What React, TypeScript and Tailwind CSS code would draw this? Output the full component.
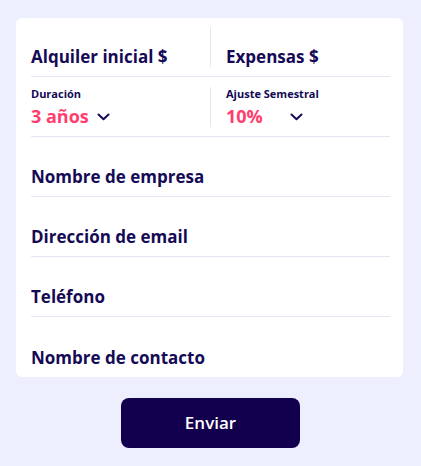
import React from "react";

const Chevron = () => (
  <svg width="13" height="8" viewBox="0 0 13 8" fill="none" className="text-[#150a55]">
    <path d="M1.5 1.5 L6.5 6.2 L11.5 1.5" stroke="currentColor" strokeWidth="2" strokeLinecap="round" strokeLinejoin="round" />
  </svg>
);

const Field = ({ label, last }: { label: string; last?: boolean }) => (
  <div className={`flex h-[60px] items-end pb-[7px] ${last ? "" : "border-b border-[#e6e6f0]"}`}>
    <span className="text-[17px] font-bold leading-[24px] text-[#150a55]">{label}</span>
  </div>
);

export default function App() {
  return (
    <div
      className="min-h-[466px] w-full bg-[#eeeffe] pt-[18px]"
      style={{ fontFamily: "'Open Sans', 'Noto Sans', sans-serif" }}
    >
      <div className="ml-[16px] mr-[18px] h-[359px] overflow-hidden rounded-[6px] bg-white pl-[15px] pr-[13px]">
        <div className="flex h-[59px] border-b border-[#e6e6f0]">
          <div className="flex w-[179px] items-end pb-[7px]">
            <span className="text-[17px] font-bold leading-[24px] text-[#150a55]">Alquiler inicial $</span>
          </div>
          <div className="mt-[9px] h-[40px] w-px bg-[#e6e6f0]" />
          <div className="flex flex-1 items-end pb-[7px] pl-[15px]">
            <span className="text-[17px] font-bold leading-[24px] text-[#150a55]">Expensas $</span>
          </div>
        </div>
        <div className="flex h-[60px] border-b border-[#e6e6f0]">
          <div className="w-[179px] pt-[10px]">
            <div className="text-[11px] font-bold leading-[14px] text-[#150a55]">Duración</div>
            <div className="mt-[3px] flex items-center">
              <span className="text-[18px] font-bold leading-[24px] text-[#ff3d6e]">3 años</span>
              <span className="ml-[8px] mt-[2px]"><Chevron /></span>
            </div>
          </div>
          <div className="mt-[10px] h-[40px] w-px bg-[#e6e6f0]" />
          <div className="flex-1 pl-[15px] pt-[10px]">
            <div className="text-[11px] font-bold leading-[14px] text-[#150a55]">Ajuste Semestral</div>
            <div className="mt-[3px] flex items-center">
              <span className="w-[64px] text-[18px] font-bold leading-[24px] text-[#ff3d6e]">10%</span>
              <span className="mt-[2px]"><Chevron /></span>
            </div>
          </div>
        </div>
        <Field label="Nombre de empresa" />
        <Field label="Dirección de email" />
        <Field label="Teléfono" />
        <Field label="Nombre de contacto" last />
      </div>
      <div className="mt-[21px] flex justify-center">
        <button className="h-[50px] w-[179px] rounded-[8px] bg-[#12004f] text-[17px] font-semibold text-white">
          Enviar
        </button>
      </div>
    </div>
  );
}
